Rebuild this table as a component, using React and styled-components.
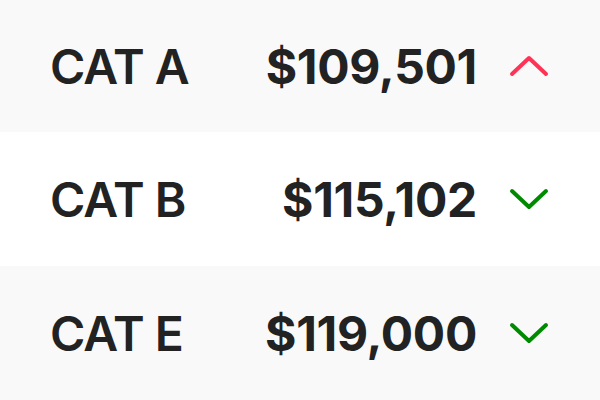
import React from 'react';
import styled, { createGlobalStyle } from 'styled-components';

const GlobalStyle = createGlobalStyle`
    html, body {
        margin: 0;
        padding: 0;
        background: #ffffff;
    }
    body {
        font-family: 'Inter', 'Liberation Sans', sans-serif;
    }
`

const List = styled.div`
    display: flex;
    flex-direction: column;
    width: 600px;
    height: 400px;
`

const Row = styled.div`
    display: grid;
    grid-template-columns: 1fr auto 40px;
    align-items: center;
    column-gap: 32px;
    height: ${props => props.height}px;
    padding: 0 51px 0 50px;
    background: ${props => props.striped ? '#f9f9f9' : '#ffffff'};
    color: #222222;
`

const Label = styled.div`
    font-size: 48px;
    font-weight: 600;
    letter-spacing: -1px;
`

const Amount = styled.div`
    font-size: 48px;
    font-weight: 700;
    text-align: right;
    letter-spacing: -0.3px;
`

const Trend = styled.svg`
    width: 40px;
    height: 22px;
    display: block;
    color: ${props => props.up ? '#ff3355' : '#008a00'};
`

function TrendIcon({ up }) {
    return (
        <Trend up={up ? 1 : 0} viewBox="0 0 40 22" fill="none">
            <path
                d={up ? 'M3 19 L20 3 L37 19' : 'M3 3 L20 19 L37 3'}
                stroke="currentColor"
                strokeWidth="4"
                strokeLinecap="round"
                strokeLinejoin="round"
            />
        </Trend>
    );
}

const rows = [
    { label: 'CAT A', amount: '$109,501', up: true, height: 132 },
    { label: 'CAT B', amount: '$115,102', up: false, height: 134 },
    { label: 'CAT E', amount: '$119,000', up: false, height: 134 },
];

export default function App() {
    return (
        <>
            <GlobalStyle />
            <List>
                {rows.map((r, i) => (
                    <Row key={r.label} striped={i % 2 === 0} height={r.height}>
                        <Label>{r.label}</Label>
                        <Amount>{r.amount}</Amount>
                        <TrendIcon up={r.up} />
                    </Row>
                ))}
            </List>
        </>
    );
}
